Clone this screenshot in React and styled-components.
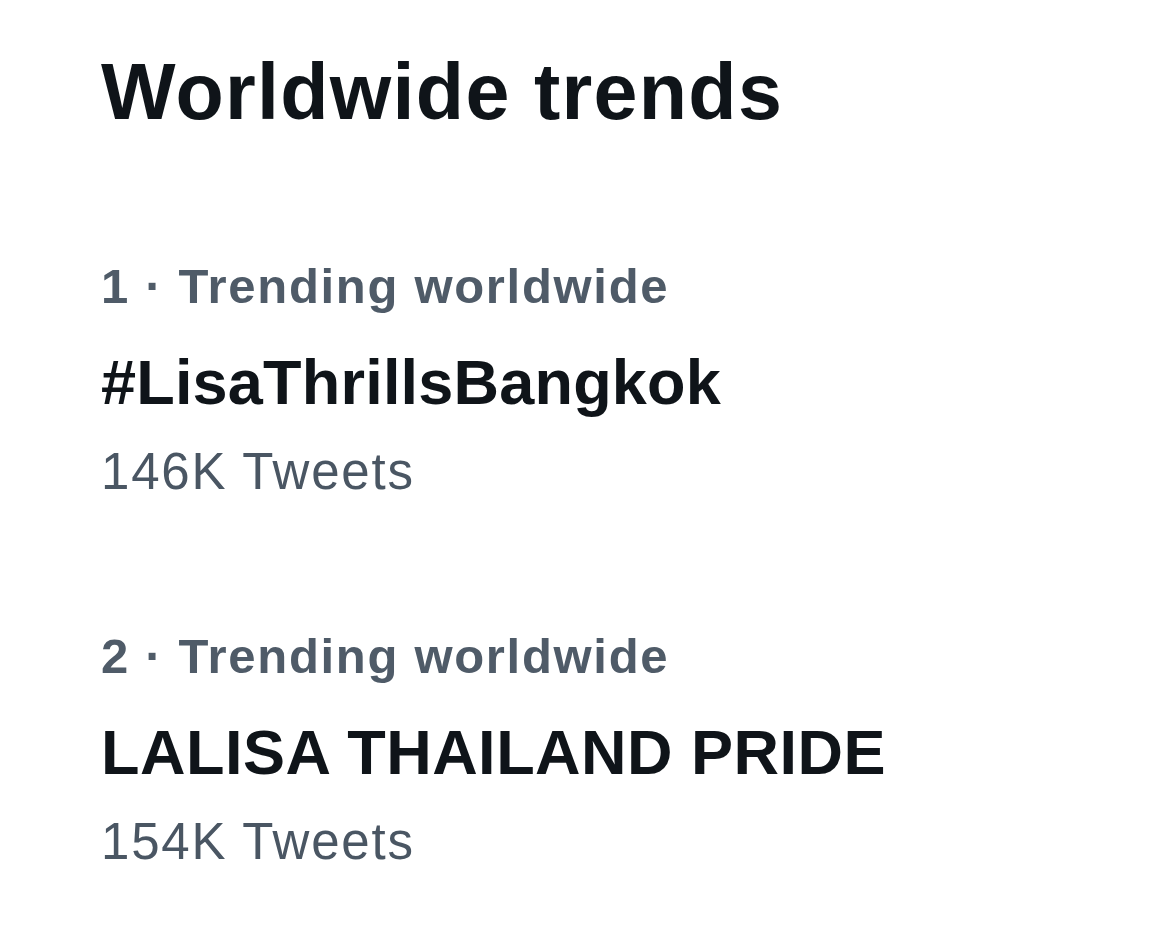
import styled, { createGlobalStyle } from "styled-components";

const trends = [
  { rank: 1, name: "#LisaThrillsBangkok", count: "146K Tweets" },
  { rank: 2, name: "LALISA THAILAND PRIDE", count: "154K Tweets" },
];

const GlobalStyle = createGlobalStyle`
  html, body {
    margin: 0;
    padding: 0;
    background: #ffffff;
  }
  body {
    font-family: "Liberation Sans", Arial, sans-serif;
    color: #0f1419;
  }
`;

const Page = styled.main`
  box-sizing: border-box;
  width: 1160px;
  height: 952px;
  padding: 53px 0 0 101px;
  display: flex;
  flex-direction: column;
  gap: 131px;
  overflow: hidden;
`;

const Title = styled.h1`
  margin: 0;
  font-size: 79px;
  line-height: 78px;
  font-weight: 700;
  letter-spacing: 1.3px;
  color: #0f1419;
`;

const List = styled.ul`
  margin: 0;
  padding: 0;
  list-style: none;
  display: flex;
  flex-direction: column;
  gap: 135px;
`;

const Trend = styled.li`
  display: flex;
  flex-direction: column;
`;

const Meta = styled.span`
  font-size: 49px;
  line-height: 49px;
  font-weight: 700;
  letter-spacing: 1.7px;
  color: #4f5b68;
  margin-bottom: 40px;
`;

const Name = styled.span`
  font-size: 63px;
  line-height: 63px;
  font-weight: 700;
  letter-spacing: ${(p) => (p.$caps ? "0.5px" : "0.2px")};
  color: #0f1419;
  margin-bottom: 32px;
`;

const Count = styled.span`
  font-size: 51px;
  line-height: 51px;
  font-weight: 400;
  letter-spacing: 1.8px;
  color: #4a5663;
`;

export default function App() {
  return (
    <>
      <GlobalStyle />
      <Page>
        <Title>Worldwide trends</Title>
        <List>
          {trends.map((t) => (
            <Trend key={t.rank}>
              <Meta>{t.rank} · Trending worldwide</Meta>
              <Name $caps={t.name === t.name.toUpperCase()}>{t.name}</Name>
              <Count>{t.count}</Count>
            </Trend>
          ))}
        </List>
      </Page>
    </>
  );
}
